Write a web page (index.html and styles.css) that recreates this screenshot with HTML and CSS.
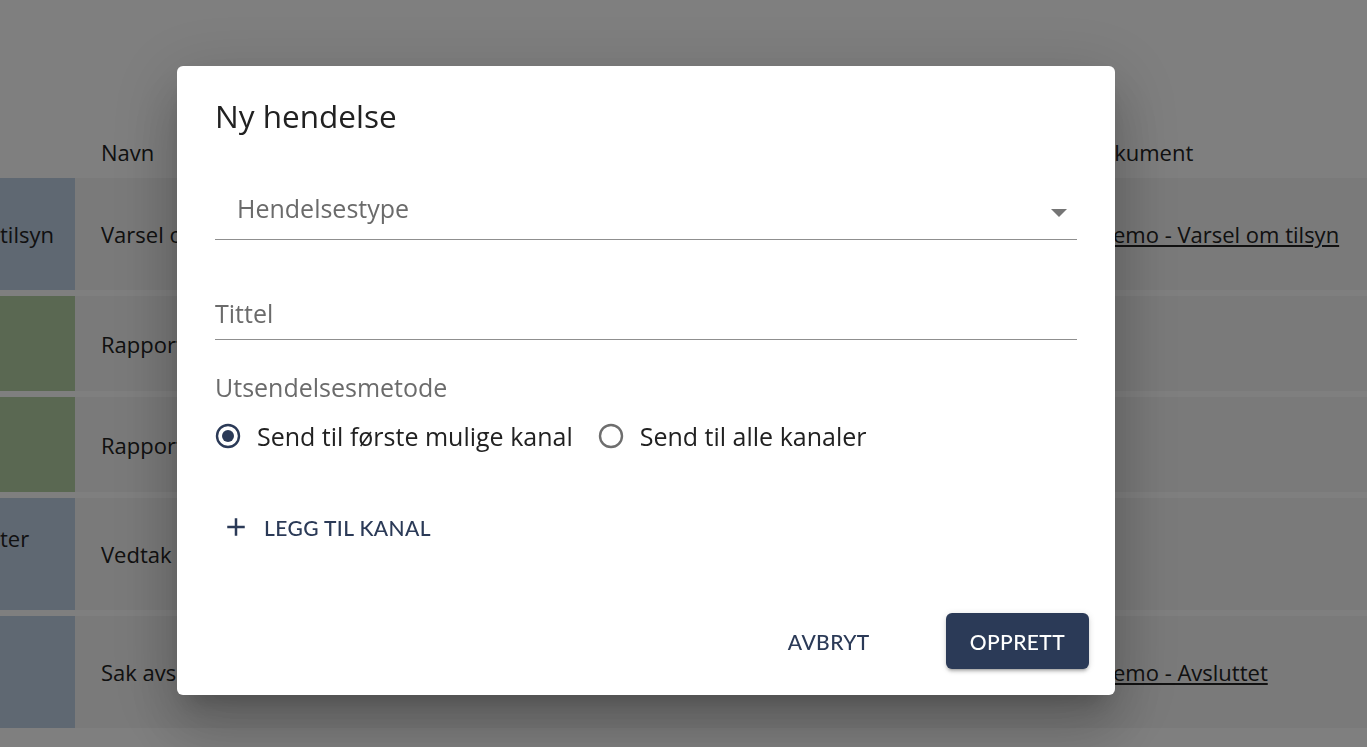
FILE: index.html
```html
<!DOCTYPE html>
<html lang="no">
<head>
<meta charset="utf-8">
<title>Ny hendelse</title>
<link rel="stylesheet" href="styles.css">
</head>
<body>
<main class="page">
  <div class="events">
    <div class="row head">
      <div class="cell type"></div>
      <div class="cell name">Navn</div>
      <div class="cell mid"></div>
      <div class="cell doc">Dokument</div>
    </div>
    <div class="row tall">
      <div class="cell type blue">tilsyn</div>
      <div class="cell name">Varsel om tilsyn</div>
      <div class="cell mid"></div>
      <div class="cell doc link"><a href="#">Demo - Varsel om tilsyn</a></div>
    </div>
    <div class="row short">
      <div class="cell type green"></div>
      <div class="cell name">Rapport</div>
      <div class="cell mid"></div>
      <div class="cell doc"></div>
    </div>
    <div class="row short">
      <div class="cell type green"></div>
      <div class="cell name">Rapport</div>
      <div class="cell mid"></div>
      <div class="cell doc"></div>
    </div>
    <div class="row tall">
      <div class="cell type blue top">ter</div>
      <div class="cell name">Vedtak</div>
      <div class="cell mid"></div>
      <div class="cell doc"></div>
    </div>
    <div class="row tall">
      <div class="cell type blue"></div>
      <div class="cell name">Sak avsluttet</div>
      <div class="cell mid"></div>
      <div class="cell doc link"><a href="#">Demo - Avsluttet</a></div>
    </div>
  </div>
</main>

<div class="backdrop">
  <section class="dialog" role="dialog" aria-labelledby="dlg-title">
    <h2 class="dialog-title" id="dlg-title">Ny hendelse</h2>
    <div class="dialog-content">
      <div class="field select">
        <span class="placeholder">Hendelsestype</span>
        <svg class="caret" width="16" height="8" viewBox="0 0 16 8"><path d="M0 0h16L8 8z" fill="#757575"/></svg>
      </div>
      <div class="field text">
        <span class="placeholder">Tittel</span>
      </div>
      <div class="group-label">Utsendelsesmetode</div>
      <div class="radios">
        <label class="radio">
          <svg width="26" height="26" viewBox="0 0 26 26"><circle cx="13" cy="13" r="11" fill="none" stroke="#2b3a57" stroke-width="2.4"/><circle cx="13" cy="13" r="6" fill="#2b3a57"/></svg>
          <span>Send til første mulige kanal</span>
        </label>
        <label class="radio">
          <svg width="26" height="26" viewBox="0 0 26 26"><circle cx="13" cy="13" r="11" fill="none" stroke="#6e6e6e" stroke-width="2.4"/></svg>
          <span>Send til alle kanaler</span>
        </label>
      </div>
      <button class="btn text add" type="button">
        <svg class="plus" width="30" height="30" viewBox="0 0 24 24"><path d="M19 13h-6v6h-2v-6H5v-2h6V5h2v6h6v2z" fill="#2b3a57"/></svg>
        <span>Legg til kanal</span>
      </button>
    </div>
    <div class="dialog-actions">
      <button class="btn text" type="button">Avbryt</button>
      <button class="btn contained" type="button">Opprett</button>
    </div>
  </section>
</div>
</body>
</html>
```

FILE: styles.css
```css
* { box-sizing: border-box; }
html, body { margin: 0; height: 100%; }
body {
  background: #ffffff;
  font-family: "Open Sans", "Noto Sans", sans-serif;
  color: #222222;
  overflow: hidden;
}

.page { width: 1367px; }

.events {
  display: flex;
  flex-direction: column;
  gap: 6px;
  padding-top: 132px;
}

.row {
  display: grid;
  grid-template-columns: 75px 300px 1fr 282px;
  font-size: 22px;
}
.row.head { height: 40px; }
.row.tall { height: 112px; background: #f4f4f4; }
.row.short { height: 95px; background: #f4f4f4; }

.cell {
  display: flex;
  align-items: center;
  white-space: nowrap;
  overflow: hidden;
}
.cell.type { padding-left: 0; }
.cell.type.top { align-items: flex-start; padding-top: 25px; }
.cell.name { padding-left: 26px; }
.cell.doc { padding-left: 0; }
.cell.doc.link { padding-left: 12px; }
.blue { background: #bfd0e5; }
.green { background: #b4d0a4; }
.cell a { color: #222222; text-decoration: underline; }

.backdrop {
  position: fixed;
  inset: 0;
  background: rgba(0, 0, 0, 0.5);
  display: flex;
  align-items: flex-start;
}

.dialog {
  margin: 66px 0 0 177px;
  width: 938px;
  height: 629px;
  background: #ffffff;
  border-radius: 6px;
  box-shadow: 0 16px 22px -10px rgba(0,0,0,0.2), 0 36px 57px 5px rgba(0,0,0,0.14), 0 14px 69px 12px rgba(0,0,0,0.12);
  display: flex;
  flex-direction: column;
}

.dialog-title {
  margin: 0;
  padding: 26px 38px 0;
  font-size: 31.5px;
  line-height: 48px;
  font-weight: 500;
  color: #212121;
}

.dialog-content {
  padding: 0 38px;
  display: flex;
  flex-direction: column;
  align-items: stretch;
}

.field {
  display: flex;
  align-items: center;
  border-bottom: 1px solid #8f8f8f;
  font-size: 25px;
  color: #6b6b6b;
}
.field.select {
  margin-top: 39px;
  height: 61px;
  padding: 0 10px 0 22px;
  justify-content: space-between;
}
.field.select .caret { margin-top: 7px; }
.field.select .placeholder { margin-top: -3px; }
.field.text {
  margin-top: 49px;
  height: 51px;
}
.field.text .placeholder { margin-top: -3px; }

.group-label {
  margin-top: 29px;
  line-height: 36px;
  font-size: 25px;
  color: #6b6b6b;
}

.radios {
  margin-top: 11px;
  height: 40px;
  display: flex;
  align-items: center;
  gap: 25px;
}
.radio {
  display: flex;
  align-items: center;
  gap: 16px;
  font-size: 25px;
  color: #212121;
}
.radio span { margin-top: -1px; }

.btn {
  font-family: Lato, "Open Sans", sans-serif;
  font-size: 21px;
  font-weight: 500;
  letter-spacing: 0.4px;
  text-transform: uppercase;
  border: 0;
  background: none;
  cursor: pointer;
  display: inline-flex;
  align-items: center;
  justify-content: center;
}
.btn.text { color: #2b3a57; padding: 0 25px; height: 56px; }
.btn.add {
  margin-top: 44px;
  align-self: flex-start;
  padding: 0 12px;
  height: 54px;
}
.btn.add .plus { margin: 0 13px 0 -6px; }
.btn.contained {
  color: #ffffff;
  background: #2b3a57;
  border-radius: 6px;
  padding: 0 24px;
  height: 56px;
  box-shadow: 0 4px 2px -3px rgba(0,0,0,0.2), 0 3px 3px 0 rgba(0,0,0,0.14), 0 1px 7px 0 rgba(0,0,0,0.12);
}

.dialog-actions {
  margin-top: auto;
  padding: 0 26px 26px;
  display: flex;
  justify-content: flex-end;
  gap: 51px;
}
```
